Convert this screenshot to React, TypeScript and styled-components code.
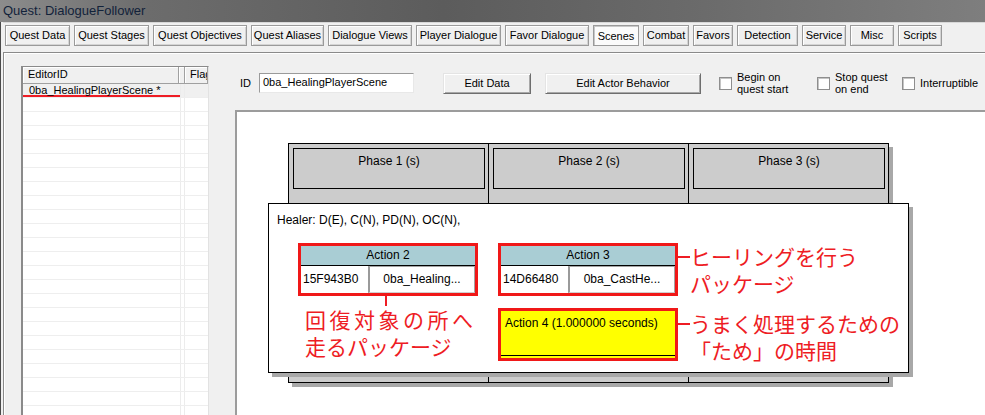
import styled, { createGlobalStyle } from "styled-components";

const GlobalStyle = createGlobalStyle`
	* { box-sizing: border-box; }
	html, body { margin: 0; padding: 0; }
	body {
		width: 985px;
		height: 415px;
		overflow: hidden;
		background: #f0f0f0;
		font-family: "Liberation Sans", Arial, sans-serif;
		color: #000;
	}
`;

// **WINDOW
const WindowSC = styled.div`
	width: 985px;
	height: 415px;
	display: flex;
	flex-direction: column;
	overflow: hidden;
`;
const TitleBarSC = styled.div`
	height: 22px;
	flex-shrink: 0;
	padding-left: 3px;
	font-size: 13px;
	line-height: 21px;
	color: #12223a;
	background-image: linear-gradient(
		90deg,
		#8c8c8c 0%,
		#6c6c6c 15%,
		#5c5c5c 45%,
		#6a6a6a 70%,
		#7e7e7e 100%
	);
`;
const BodySC = styled.div`
	flex: 1;
	display: flex;
	flex-direction: column;
	border-left: 1px solid #4a4a4a;
	padding-left: 2px;
	min-height: 0;
`;

// **TABS
const TabStripSC = styled.div`
	height: 30px;
	flex-shrink: 0;
	display: flex;
	gap: 4px;
	padding: 2px 0 0 2px;
	border-top: 1px solid #d8d8d8;
`;
const TabSC = styled.div<{ $w: number; $active?: boolean }>`
	width: ${(p) => p.$w}px;
	height: 21px;
	font-size: 11px;
	line-height: 19px;
	text-align: center;
	white-space: nowrap;
	border: 1px solid #9a9a9a;
	background: ${(p) => (p.$active ? "#fbfbfb" : "#f0f0f0")};
	box-shadow: ${(p) =>
		p.$active
			? "inset 1px 1px #c8c8c8"
			: "inset 1px 1px #fff, inset -1px -1px #d4d4d4"};
	padding-top: ${(p) => (p.$active ? "1px" : "0")};
`;

// **PANEL
const PanelSC = styled.div`
	flex: 1;
	display: flex;
	border-top: 1px solid #8a8a8a;
	border-left: 1px solid #8a8a8a;
	box-shadow: inset 1px 1px #fff;
	min-height: 0;
`;
const LeftPaneSC = styled.div`
	width: 231px;
	flex-shrink: 0;
	padding: 13px 0 0 17px;
	display: flex;
`;
const ListSC = styled.div`
	width: 188px;
	background: #fff;
	border-left: 2px solid #8a8a8a;
	border-top: 1px solid #8a8a8a;
	border-right: 1px solid #e2e2e2;
	overflow: hidden;
`;
const ListHeaderSC = styled.div`
	display: flex;
	height: 17px;
	background: #f0f0f0;
`;
const HeaderCellSC = styled.div<{ $w?: number }>`
	${(p) => (p.$w ? `width: ${p.$w}px;` : "flex: 1;")}
	flex-shrink: 0;
	font-size: 11px;
	line-height: 15px;
	padding-left: 5px;
	white-space: nowrap;
	overflow: hidden;
	border-right: 1px solid #a0a0a0;
	border-bottom: 1px solid #a0a0a0;
	box-shadow: inset 1px 1px #fff;
`;
const RowSC = styled.div<{ $selected?: boolean }>`
	display: flex;
	height: 14px;
	border-bottom: 1px solid #eeeeee;
	background: ${(p) => (p.$selected ? "#f0f0f0" : "#fff")};
`;
const RowCellSC = styled.div<{ $marked?: boolean }>`
	width: 158px;
	flex-shrink: 0;
	font-size: 11px;
	line-height: 13px;
	padding-left: 6px;
	white-space: nowrap;
	border-right: 1px solid #ececec;
	box-shadow: ${(p) => (p.$marked ? "inset 0 -2px 0 #ee1c24" : "none")};
`;
const FlagCellSC = styled.div`
	flex: 1;
	margin-left: 3px;
	border-left: 1px solid #ececec;
`;

const RightPaneSC = styled.div`
	flex: 1;
	display: flex;
	flex-direction: column;
	min-width: 0;
`;

// **TOOLBAR
const ToolbarSC = styled.div`
	height: 57px;
	flex-shrink: 0;
	display: flex;
	align-items: center;
	padding: 3px 0 0 5px;
	font-size: 11px;
`;
const IdLabelSC = styled.span`
	width: 19px;
`;
const IdInputSC = styled.div`
	width: 155px;
	height: 20px;
	background: #fff;
	border: 1px solid;
	border-color: #9a9a9a #e8e8e8 #e8e8e8 #9a9a9a;
	padding-left: 3px;
	line-height: 17px;
	white-space: nowrap;
`;
const ButtonSC = styled.div<{ $w: number; $ml: number }>`
	width: ${(p) => p.$w}px;
	height: 21px;
	margin-left: ${(p) => p.$ml}px;
	text-align: center;
	line-height: 19px;
	background: #f0f0f0;
	border: 1px solid;
	border-color: #e4e4e4 #6e6e6e #6e6e6e #e4e4e4;
	box-shadow: inset 1px 1px #fff, inset -1px -1px #a8a8a8;
`;
const CheckGroupSC = styled.div<{ $w?: number; $ml?: number }>`
	${(p) => (p.$w ? `width: ${p.$w}px;` : "")}
	margin-left: ${(p) => p.$ml ?? 0}px;
	display: flex;
	align-items: center;
	flex-shrink: 0;
`;
const CheckBoxSC = styled.span`
	width: 13px;
	height: 13px;
	flex-shrink: 0;
	background: #fff;
	border: 1px solid #8e8e8e;
	box-shadow: inset 1px 1px #c4c4c4;
	margin-right: 5px;
`;
const CheckLabelSC = styled.span`
	line-height: 12px;
	white-space: pre;
`;

// **SCENE CANVAS
const CanvasSC = styled.div`
	flex: 1;
	background: #fff;
	border-top: 2px solid #9c9c9c;
	border-left: 2px solid #9c9c9c;
	padding: 31px 0 0 51px;
	overflow: hidden;
`;
const PhaseBandSC = styled.div`
	position: relative;
	width: 601px;
	height: 240px;
	display: grid;
	grid-template-columns: repeat(3, 200px);
	background: #cccccc;
	border: 1px solid #000;
	border-right: none;
	box-shadow: 4px 4px 0 #a8a8a8;
`;
const PhaseColumnSC = styled.div`
	border-right: 1px solid #000;
	padding: 4px 3px 0 4px;
`;
const PhaseBoxSC = styled.div`
	height: 41px;
	border: 1px solid #000;
	background: #cccccc;
	text-align: center;
	font-size: 12px;
	line-height: 14px;
	padding-top: 5px;
`;
const ActorBoxSC = styled.div`
	position: absolute;
	left: -21px;
	top: 59px;
	width: 641px;
	height: 170px;
	background: #fff;
	border: 1px solid #000;
	box-shadow: 4px 4px 0 #a8a8a8;
	padding-left: 8px;
`;
const HealerSC = styled.div`
	height: 39px;
	padding-top: 9px;
	font-size: 12px;
	line-height: 14px;
`;
const ActionGridSC = styled.div`
	margin-left: 21px;
	display: grid;
	grid-template-columns: 180px 20px 180px auto;
	grid-template-rows: 53px 12px 53px;
	grid-template-areas:
		"a2 . a3 n1"
		"l1 . . ."
		"l1 . a4 n2";
`;
const ActionBoxSC = styled.div<{ $area: string; $yellow?: boolean }>`
	grid-area: ${(p) => p.$area};
	border: 3px solid #f01818;
	background: ${(p) => (p.$yellow ? "#ffff00" : "#fff")};
	font-size: 12px;
`;
const ActionHeaderSC = styled.div`
	height: 20px;
	background: #a9cdd4;
	border-bottom: 1px solid #000;
	text-align: center;
	line-height: 19px;
`;
const ActionRowSC = styled.div`
	display: flex;
	height: 27px;
`;
const IdCellSC = styled.div`
	width: 67px;
	padding-left: 2px;
	line-height: 27px;
`;
const NameCellSC = styled.div`
	flex: 1;
	border: 1px solid #a4a4a4;
	border-left: 2px solid #9a9a9a;
	border-bottom-color: #d0d0d0;
	text-align: center;
	line-height: 24px;
	white-space: nowrap;
	overflow: hidden;
`;
const WaitBodySC = styled.div`
	height: 45px;
	border-bottom: 1px solid #000;
	padding: 5px 0 0 4px;
	line-height: 14px;
	white-space: nowrap;
`;

// **ANNOTATIONS
const NoteSC = styled.div<{ $area: string; $pt?: number }>`
	grid-area: ${(p) => p.$area};
	display: flex;
	align-items: flex-start;
	padding-top: ${(p) => p.$pt ?? 0}px;
`;
const HConnectorSC = styled.span`
	width: 12px;
	height: 2px;
	margin-top: 13px;
	background: #ee1c24;
	flex-shrink: 0;
`;
const VConnectorSC = styled.div`
	width: 2px;
	height: 10px;
	margin-left: 87px;
	background: #ee1c24;
`;
const NoteTextSC = styled.div<{ $pl?: number }>`
	padding-left: ${(p) => p.$pl ?? 0}px;
	color: #ee1c24;
	font-family: "Noto Sans CJK JP", "Noto Sans", sans-serif;
	font-size: 21px;
	line-height: 27px;
	white-space: nowrap;
`;
const NoteLineSC = styled.div<{ $ls?: number }>`
	letter-spacing: ${(p) => p.$ls ?? 0}px;
`;
const LeftNoteSC = styled.div`
	grid-area: l1;
`;

const tabs: [string, number][] = [
	["Quest Data", 65],
	["Quest Stages", 75],
	["Quest Objectives", 94],
	["Quest Aliases", 73],
	["Dialogue Views", 84],
	["Player Dialogue", 85],
	["Favor Dialogue", 84],
	["Scenes", 46],
	["Combat", 46],
	["Favors", 40],
	["Detection", 61],
	["Service", 44],
	["Misc", 44],
	["Scripts", 44],
];

const emptyRows = Array.from({ length: 24 }, (_, i) => i);

export default function App() {
	return (
		<>
			<GlobalStyle />
			<WindowSC>
				<TitleBarSC>Quest: DialogueFollower</TitleBarSC>
				<BodySC>
					<TabStripSC>
						{tabs.map(([label, w]) => (
							<TabSC key={label} $w={w} $active={label === "Scenes"}>
								{label}
							</TabSC>
						))}
					</TabStripSC>
					<PanelSC>
						<LeftPaneSC>
							<ListSC>
								<ListHeaderSC>
									<HeaderCellSC $w={156}>EditorID</HeaderCellSC>
									<HeaderCellSC $w={5} />
									<HeaderCellSC>Flags</HeaderCellSC>
								</ListHeaderSC>
								<RowSC $selected>
									<RowCellSC $marked>0ba_HealingPlayerScene *</RowCellSC>
									<FlagCellSC />
								</RowSC>
								{emptyRows.map((i) => (
									<RowSC key={i}>
										<RowCellSC />
										<FlagCellSC />
									</RowSC>
								))}
							</ListSC>
						</LeftPaneSC>
						<RightPaneSC>
							<ToolbarSC>
								<IdLabelSC>ID</IdLabelSC>
								<IdInputSC>0ba_HealingPlayerScene</IdInputSC>
								<ButtonSC $w={88} $ml={29}>
									Edit Data
								</ButtonSC>
								<ButtonSC $w={156} $ml={14}>
									Edit Actor Behavior
								</ButtonSC>
								<CheckGroupSC $w={98} $ml={18}>
									<CheckBoxSC />
									<CheckLabelSC>{"Begin on\nquest start"}</CheckLabelSC>
								</CheckGroupSC>
								<CheckGroupSC $w={85}>
									<CheckBoxSC />
									<CheckLabelSC>{"Stop quest\non end"}</CheckLabelSC>
								</CheckGroupSC>
								<CheckGroupSC>
									<CheckBoxSC />
									<CheckLabelSC>Interruptible</CheckLabelSC>
								</CheckGroupSC>
							</ToolbarSC>
							<CanvasSC>
								<PhaseBandSC>
									<PhaseColumnSC>
										<PhaseBoxSC>Phase 1 (s)</PhaseBoxSC>
									</PhaseColumnSC>
									<PhaseColumnSC>
										<PhaseBoxSC>Phase 2 (s)</PhaseBoxSC>
									</PhaseColumnSC>
									<PhaseColumnSC>
										<PhaseBoxSC>Phase 3 (s)</PhaseBoxSC>
									</PhaseColumnSC>
									<ActorBoxSC>
										<HealerSC>Healer: D(E), C(N), PD(N), OC(N),</HealerSC>
										<ActionGridSC>
											<ActionBoxSC $area="a2">
												<ActionHeaderSC>Action 2</ActionHeaderSC>
												<ActionRowSC>
													<IdCellSC>15F943B0</IdCellSC>
													<NameCellSC>0ba_Healing...</NameCellSC>
												</ActionRowSC>
											</ActionBoxSC>
											<ActionBoxSC $area="a3">
												<ActionHeaderSC>Action 3</ActionHeaderSC>
												<ActionRowSC>
													<IdCellSC>14D66480</IdCellSC>
													<NameCellSC>0ba_CastHe...</NameCellSC>
												</ActionRowSC>
											</ActionBoxSC>
											<NoteSC $area="n1">
												<HConnectorSC />
												<NoteTextSC>
													<NoteLineSC>ヒーリングを行う</NoteLineSC>
													<NoteLineSC>パッケージ</NoteLineSC>
												</NoteTextSC>
											</NoteSC>
											<LeftNoteSC>
												<VConnectorSC />
												<NoteTextSC $pl={7}>
													<NoteLineSC $ls={3.5}>回復対象の所へ</NoteLineSC>
													<NoteLineSC>走るパッケージ</NoteLineSC>
												</NoteTextSC>
											</LeftNoteSC>
											<ActionBoxSC $area="a4" $yellow>
												<WaitBodySC>Action 4 (1.000000 seconds)</WaitBodySC>
											</ActionBoxSC>
											<NoteSC $area="n2" $pt={2}>
												<HConnectorSC />
												<NoteTextSC>
													<NoteLineSC>うまく処理するための</NoteLineSC>
													<NoteLineSC>「ため」の時間</NoteLineSC>
												</NoteTextSC>
											</NoteSC>
										</ActionGridSC>
									</ActorBoxSC>
								</PhaseBandSC>
							</CanvasSC>
						</RightPaneSC>
					</PanelSC>
				</BodySC>
			</WindowSC>
		</>
	);
}
